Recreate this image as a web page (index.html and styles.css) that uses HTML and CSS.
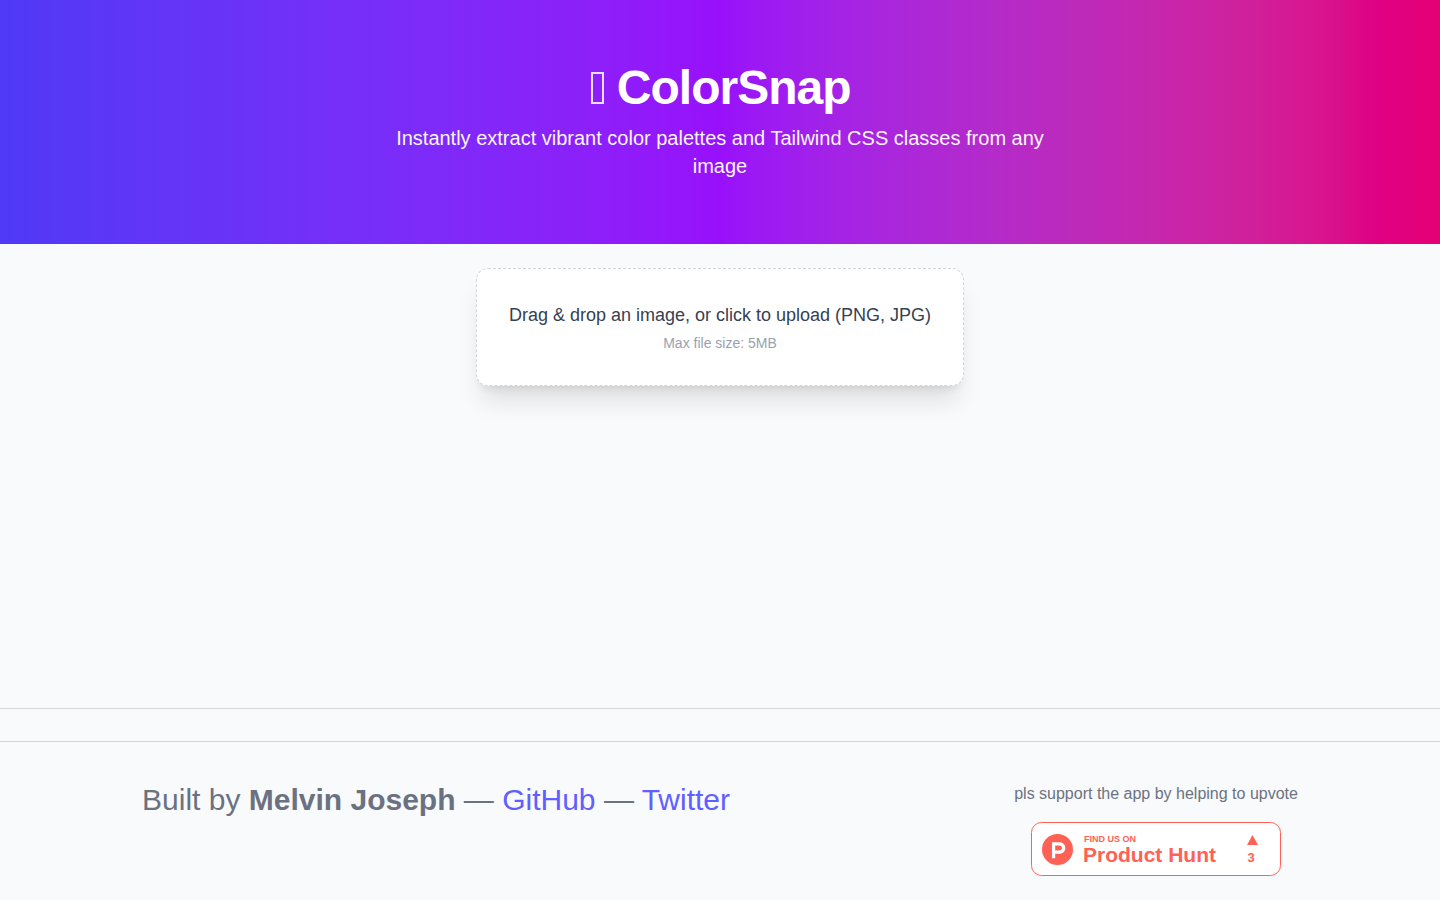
FILE: index.html
```html
<!DOCTYPE html>
<html lang="en">
<head>
    <meta charset="UTF-8">
    <meta name="viewport" content="width=device-width, initial-scale=1.0">
    <title>ColorSnap</title>
    <link rel="stylesheet" href="styles.css">
</head>
<body>
    <header class="hero">
        <h1 class="hero-title"><span class="hero-icon"></span> ColorSnap</h1>
        <p class="hero-text">Instantly extract vibrant color palettes and Tailwind CSS classes from any image</p>
    </header>

    <main class="main">
        <label class="dropzone" for="imageInput">
            <input class="file-input" type="file" id="imageInput" accept="image/png, image/jpeg">
            <span class="dropzone-title">Drag &amp; drop an image, or click to upload (PNG, JPG)</span>
            <span class="dropzone-hint">Max file size: 5MB</span>
        </label>
    </main>

    <hr class="divider">

    <footer class="footer">
        <p class="credits">
            Built by <strong>Melvin Joseph</strong> —
            <a href="#github">GitHub</a> —
            <a href="#twitter">Twitter</a>
        </p>

        <div class="support">
            <p>pls support the app by helping to upvote</p>
            <a class="badge" href="#producthunt">
                <svg width="250" height="54" viewBox="0 0 250 54">
                    <rect class="badge-frame" x="0.5" y="0.5" width="249" height="53" rx="10"/>
                    <text class="badge-label" x="53" y="20">FIND US ON</text>
                    <text class="badge-name" x="52" y="40">Product Hunt</text>
                    <path d="M221.5 13 L227 23 H216 Z"/>
                    <text class="badge-count" x="220" y="40" text-anchor="middle">3</text>
                    <g transform="translate(11 12)">
                        <circle cx="15.5" cy="15.5" r="15.5"/>
                        <path class="badge-mark" fill-rule="evenodd" d="M10 8.2 H17.6 C20.9 8.2 23.3 10.8 23.3 14 C23.3 17.2 20.9 19.8 17.6 19.8 H13.2 V24.2 H10 Z M13.2 11.5 V16.5 H17.4 C18.8 16.5 20 15.4 20 14 C20 12.6 18.8 11.5 17.4 11.5 Z"/>
                    </g>
                </svg>
            </a>
        </div>
    </footer>
</body>
</html>
```
FILE: styles.css
```css
* {
    margin: 0;
    padding: 0;
    box-sizing: border-box;
}

body {
    font-family: "Liberation Sans", Arial, sans-serif;
    font-size: 16px;
    line-height: 24px;
    min-height: 100vh;
    display: flex;
    flex-direction: column;
    background: #f9fafb;
    color: #6a7282;
}

a {
    color: #615fff;
    text-decoration: none;
}

.hero {
    padding: 64px 24px;
    text-align: center;
    color: white;
    background: linear-gradient(to right in oklab, oklch(51.1% 0.262 276.966), oklch(55.8% 0.288 302.321), oklch(59.2% 0.249 0.584));
}

.hero-title {
    margin-bottom: 12px;
    font-size: 48px;
    line-height: 48px;
    letter-spacing: -1px;
}

.hero-icon {
    display: inline-block;
    width: 13px;
    height: 32px;
    margin-left: 2px;
    border: 2px solid rgba(255, 255, 255, 0.85);
}

.hero-text {
    max-width: 672px;
    margin: 0 auto;
    font-size: 20px;
    line-height: 28px;
    opacity: 0.95;
}

.main {
    flex: 1;
    display: flex;
    justify-content: center;
    align-items: flex-start;
    padding: 24px;
}

.dropzone {
    display: flex;
    flex-direction: column;
    align-items: center;
    gap: 4px;
    padding: 32px;
    text-align: center;
    background: white;
    border: 1px dashed #d1d5dc;
    border-radius: 12px;
    box-shadow: 0 20px 25px -5px rgba(0, 0, 0, 0.1), 0 8px 10px -6px rgba(0, 0, 0, 0.1);
    cursor: pointer;
}

.dropzone:hover {
    border-color: #615fff;
}

.file-input {
    position: absolute;
    width: 1px;
    height: 1px;
    opacity: 0;
}

.dropzone-title {
    font-size: 18px;
    line-height: 28px;
    color: #364153;
}

.dropzone-hint {
    font-size: 14px;
    line-height: 20px;
    color: #99a1af;
}

.divider {
    border: none;
    border-top: 1px solid #d1d5dc;
}

.footer {
    display: flex;
    flex-wrap: wrap;
    justify-content: space-around;
    margin-top: 32px;
    padding: 40px 0 24px;
    border-top: 1px solid #d1d5dc;
}

.credits {
    font-size: 30px;
    line-height: 36px;
}

.support {
    display: flex;
    flex-direction: column;
    align-items: center;
    gap: 16px;
}

/* Product Hunt badge */
.badge svg {
    display: block;
    fill: #ff6154;
}

.badge .badge-frame {
    fill: white;
    stroke: #ff6154;
}

.badge .badge-mark {
    fill: white;
}

.badge text {
    font-weight: bold;
}

.badge-label {
    font-size: 9px;
}

.badge-name {
    font-size: 21px;
}

.badge-count {
    font-size: 13px;
}
```
